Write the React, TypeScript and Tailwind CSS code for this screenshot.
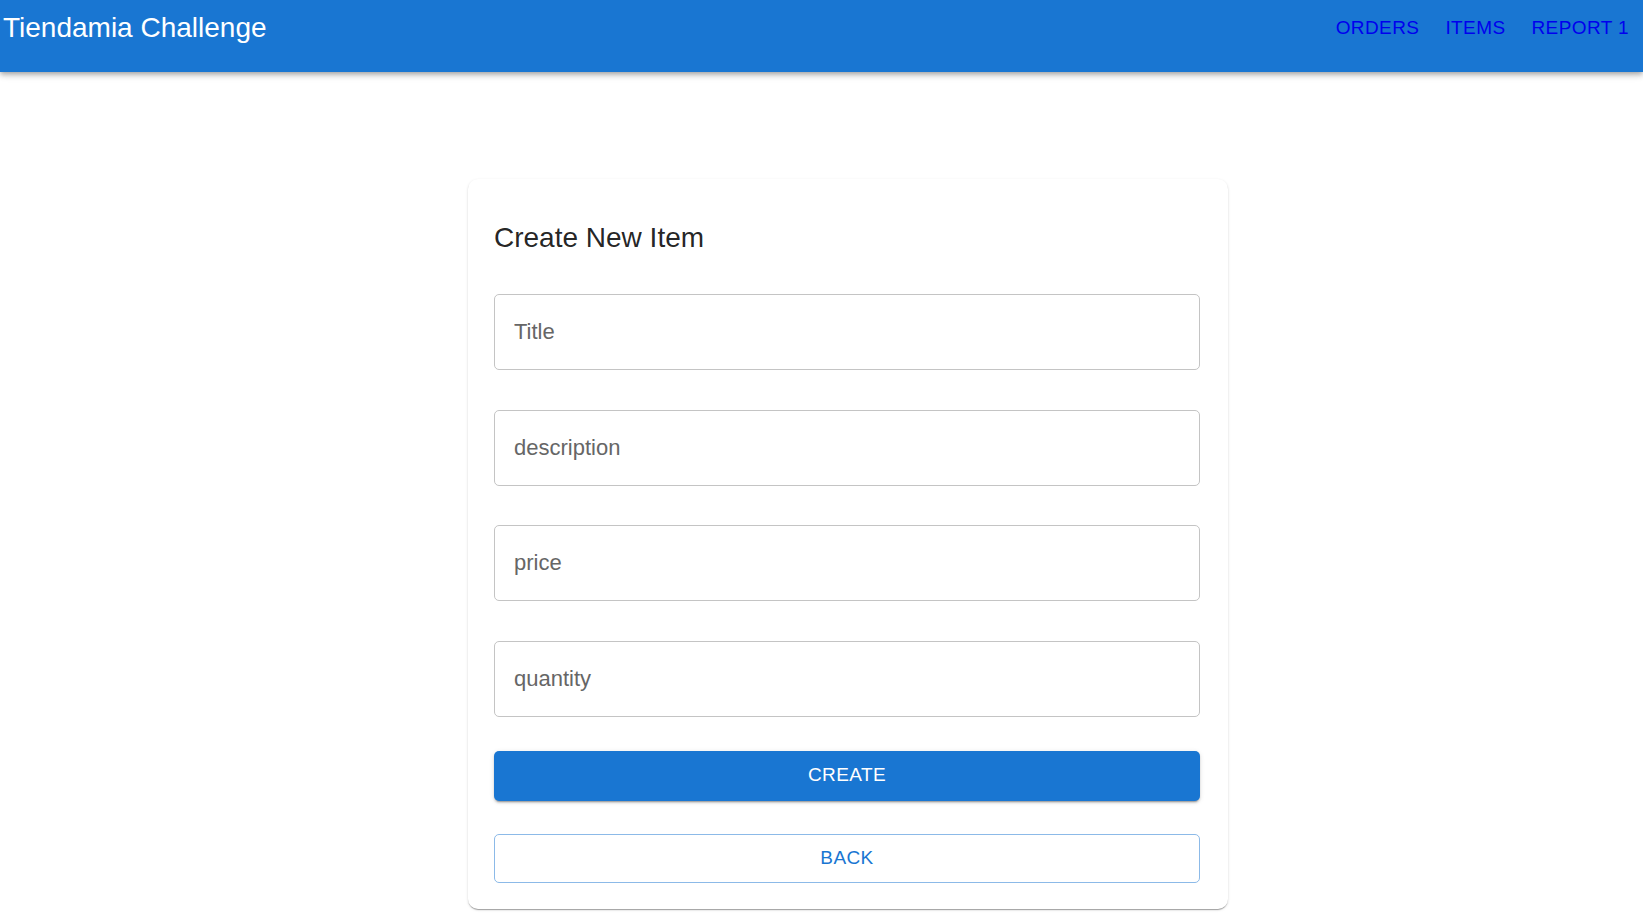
import { useState } from "react";

const fields = [
  { name: "title", label: "Title" },
  { name: "description", label: "description" },
  { name: "price", label: "price" },
  { name: "quantity", label: "quantity" },
];

const navLinks = ["ORDERS", "ITEMS", "REPORT 1"];

const App = () => {
  const [values, setValues] = useState<Record<string, string>>({});

  return (
    <div className="min-h-screen bg-white font-['Liberation_Sans',Arial,sans-serif]">
      <header className="h-[72px] bg-[#1976d2] flex justify-between shadow-[0_2px_4px_-1px_rgba(0,0,0,0.2),0_4px_5px_0_rgba(0,0,0,0.14),0_1px_10px_0_rgba(0,0,0,0.12)]">
        <div className="pl-[3px] pt-[11px] text-[28px] leading-[34px] text-white">
          Tiendamia Challenge
        </div>
        <nav className="flex gap-[26px] pr-[14px] pt-[16px]">
          {navLinks.map((link) => (
            <a
              key={link}
              href="#"
              className="text-[19px] leading-[24px] tracking-[0.4px] text-[#0000ee]"
            >
              {link}
            </a>
          ))}
        </nav>
      </header>

      <main className="pt-[107px]">
        <div className="ml-[468px] w-[760px] rounded-[10px] bg-white pl-[26px] pr-[28px] pt-[42px] pb-[26px] shadow-[0_2px_1px_-1px_rgba(0,0,0,0.2),0_1px_1px_0_rgba(0,0,0,0.14),0_1px_3px_0_rgba(0,0,0,0.12)]">
          <h2 className="mb-[39px] text-[28px] leading-[34px] text-[rgba(0,0,0,0.87)]">
            Create New Item
          </h2>

          <div className="flex flex-col gap-[39.5px]">
            {fields.map((field) => (
              <input
                key={field.name}
                placeholder={field.label}
                value={values[field.name] ?? ""}
                onChange={(e) =>
                  setValues({ ...values, [field.name]: e.target.value })
                }
                className="h-[76px] w-full rounded-[5px] border border-[#c4c4c4] px-[19px] text-[22px] text-[rgba(0,0,0,0.87)] outline-none placeholder:text-[#666666]"
              />
            ))}
          </div>

          <button className="mt-[34px] h-[50px] w-full rounded-[5px] bg-[#1976d2] text-[19px] tracking-[0.4px] text-white shadow-[0_3px_1px_-2px_rgba(0,0,0,0.2),0_2px_2px_0_rgba(0,0,0,0.14),0_1px_5px_0_rgba(0,0,0,0.12)]">
            CREATE
          </button>
          <button className="mt-[33px] h-[49px] w-full rounded-[5px] border border-[#8cbae8] bg-white text-[19px] tracking-[0.4px] text-[#1976d2]">
            BACK
          </button>
        </div>
      </main>
    </div>
  );
};

export default App;
